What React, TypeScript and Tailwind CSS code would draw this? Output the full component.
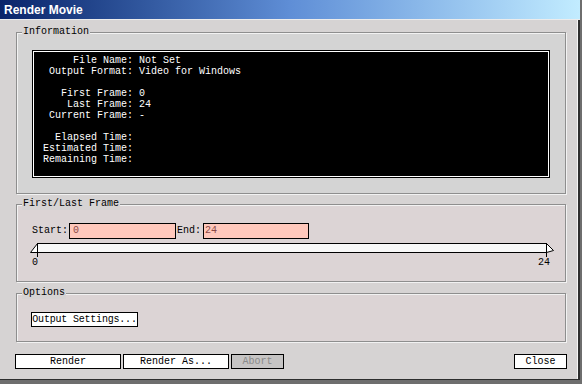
import type { ReactNode } from "react";

const mono = "font-['Liberation_Mono','DejaVu_Sans_Mono',monospace] text-[10px] leading-[12px]";

function Group({ label, className, labelBg, children }: { label: string; className: string; labelBg: string; children: ReactNode }) {
  return (
    <div className={"relative border border-[#8e8e8e] shadow-[inset_1px_1px_0_#f2f2f2,1px_1px_0_#f2f2f2] " + className}>
      <span className={"absolute -top-[7px] left-[5px] px-px text-black " + labelBg}>{label}</span>
      {children}
    </div>
  );
}

const info: [string, string][] = [
  ["File Name:", "Not Set"],
  ["Output Format:", "Video for Windows"],
  ["", ""],
  ["First Frame:", "0"],
  ["Last Frame:", "24"],
  ["Current Frame:", "-"],
  ["", ""],
  ["Elapsed Time:", ""],
  ["Estimated Time:", ""],
  ["Remaining Time:", ""],
];

function Btn({ children, className }: { children: ReactNode; className: string }) {
  return (
    <button className={"flex h-[15px] items-center justify-center overflow-hidden whitespace-nowrap border border-black leading-[12px] " + className}>
      {children}
    </button>
  );
}

export default function App() {
  return (
    <div className={"flex h-[384px] w-[582px] flex-col overflow-hidden border-b-4 border-r-2 border-[#6e6e6e] bg-[#d6d3d3] " + mono}>
      <div className="flex h-[19px] shrink-0 items-center bg-gradient-to-r from-[#0a246a] via-[#5f8ed6] to-[#c2ecff] pl-[4px] font-['Liberation_Sans',Arial,sans-serif] text-[12px] font-bold text-white">
        Render Movie
      </div>
      <div className="h-px shrink-0 bg-[#ececec]" />
      <div className="flex flex-1 flex-col border-b border-r-2 border-[#2e2e2e] pl-[16px] pr-[12px] pt-[12px] shadow-[inset_-1px_0_0_#f4f4f4]">
        <Group label="Information" labelBg="bg-[#d6d3d3]" className="h-[162px] bg-[#d4d4d4] px-[15px] pt-[17px]">
          <div className="h-[128px] border border-black bg-black pt-[4px] text-white shadow-[inset_0_0_0_1px_#ffffff]">
            {info.map(([k, v], i) => (
              <div key={i} className="flex h-[11px] leading-[11px]">
                <span className="w-[100px] whitespace-pre text-right">{k}</span>
                <span className="ml-[6px] whitespace-pre">{v}</span>
              </div>
            ))}
          </div>
        </Group>

        <Group label="First/Last Frame" labelBg="bg-[#d6d3d3]" className="mt-[10px] h-[78px] bg-[#dcd4d5] pt-[18px]">
          <div className="flex h-[16px] items-center pl-[15px]">
            <span>Start:</span>
            <div className="ml-px h-[16px] w-[107px] border border-black bg-[#ffc8bc] pl-[3px] leading-[14px] text-[#8a4848]">0</div>
            <span className="ml-[1px]">End:</span>
            <div className="ml-[2px] h-[16px] w-[106px] border border-black bg-[#ffc8bc] pl-[1px] leading-[14px] text-[#8a4848]">24</div>
          </div>
          <svg className="ml-[13px] mt-[4px] block" width="530" height="14" viewBox="0 0 530 14">
            <rect x="7" y="0.5" width="509" height="9" fill="#f8f8f8" />
            <line x1="7" y1="0.5" x2="516" y2="0.5" stroke="#000" />
            <line x1="7" y1="9.5" x2="516" y2="9.5" stroke="#000" />
            <polygon points="7.5,0.5 0.5,9.5 7.5,9.5" fill="#fff" stroke="#000" />
            <line x1="7.5" y1="0" x2="7.5" y2="14" stroke="#000" />
            <polygon points="516.5,0.5 523.5,7.5 516.5,9.5" fill="#fff" stroke="#000" />
            <line x1="516.5" y1="0" x2="516.5" y2="14" stroke="#000" />
          </svg>
          <div className="ml-[15px] flex w-[518px] justify-between">
            <span>0</span>
            <span>24</span>
          </div>
        </Group>

        <Group label="Options" labelBg="bg-[#d6d3d3]" className="mt-[11px] h-[49px] bg-[#dcd4d5] pl-[14px] pt-[18px]">
          <Btn className="w-[107px] bg-white tracking-[-0.2px]">Output Settings...</Btn>
        </Group>

        <div className="-ml-px mt-[12px] flex">
          <Btn className="w-[106px] bg-white">Render</Btn>
          <Btn className="ml-[2px] w-[106px] bg-white">Render As...</Btn>
          <Btn className="ml-[2px] w-[53px] bg-[#c6c4c4] text-[#8a8a8a]">Abort</Btn>
          <Btn className="ml-auto mr-[-1px] w-[53px] bg-white">Close</Btn>
        </div>
      </div>
    </div>
  );
}
